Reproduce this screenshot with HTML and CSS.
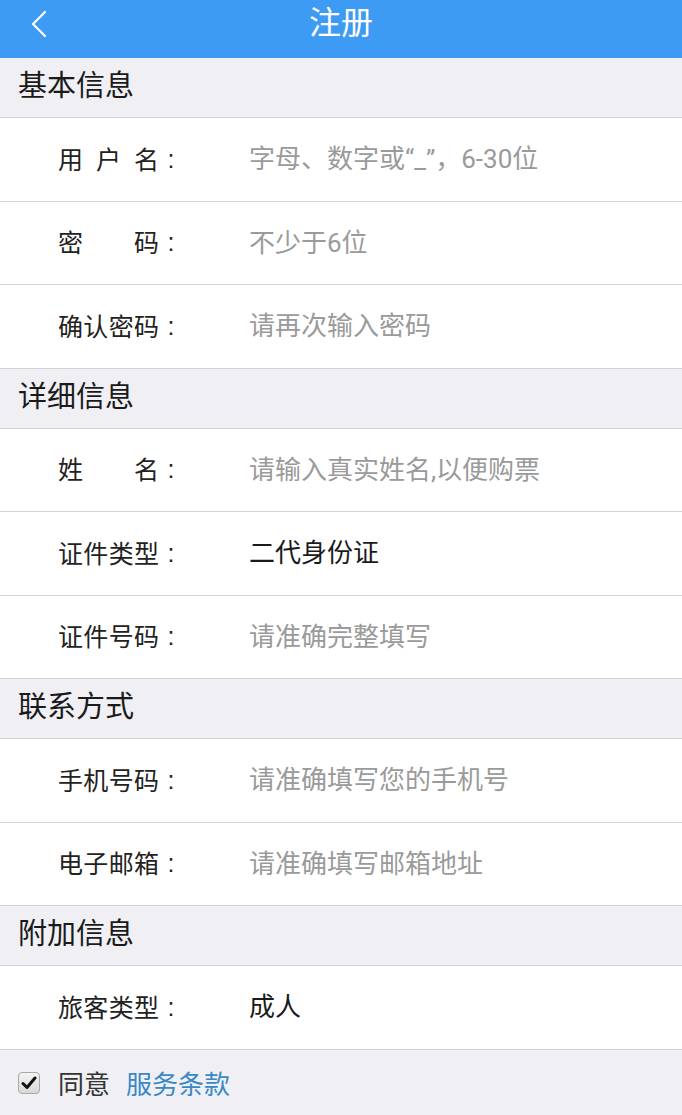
FILE: index.html
```html
<!DOCTYPE html>
<html lang="zh-CN">

<head>
    <meta charset="UTF-8">
    <meta name="viewport" content="width=device-width, initial-scale=1.0">
    <title>注册</title>
    <link rel="stylesheet" href="styles.css">
</head>

<body>
    <header class="top-bar">
        <a class="back" href="#">
            <svg width="18" height="28" viewBox="0 0 18 28">
                <polyline points="15,2 3,14 15,26" fill="none" stroke="#fff" stroke-width="2.2" stroke-linecap="round" stroke-linejoin="round"/>
            </svg>
        </a>
        <h1>注册</h1>
    </header>

    <div class="section-title">基本信息</div>
    <div class="row">
        <span class="label"><span class="label-text">用户名</span><span class="colon">:</span></span>
        <span class="value placeholder">字母、数字或“_”，6-30位</span>
    </div>
    <div class="row">
        <span class="label"><span class="label-text">密码</span><span class="colon">:</span></span>
        <span class="value placeholder">不少于6位</span>
    </div>
    <div class="row">
        <span class="label"><span class="label-text">确认密码</span><span class="colon">:</span></span>
        <span class="value placeholder">请再次输入密码</span>
    </div>

    <div class="section-title">详细信息</div>
    <div class="row">
        <span class="label"><span class="label-text">姓名</span><span class="colon">:</span></span>
        <span class="value placeholder">请输入真实姓名,以便购票</span>
    </div>
    <div class="row">
        <span class="label"><span class="label-text">证件类型</span><span class="colon">:</span></span>
        <span class="value">二代身份证</span>
    </div>
    <div class="row">
        <span class="label"><span class="label-text">证件号码</span><span class="colon">:</span></span>
        <span class="value placeholder">请准确完整填写</span>
    </div>

    <div class="section-title">联系方式</div>
    <div class="row">
        <span class="label"><span class="label-text">手机号码</span><span class="colon">:</span></span>
        <span class="value placeholder">请准确填写您的手机号</span>
    </div>
    <div class="row">
        <span class="label"><span class="label-text">电子邮箱</span><span class="colon">:</span></span>
        <span class="value placeholder">请准确填写邮箱地址</span>
    </div>

    <div class="section-title">附加信息</div>
    <div class="row">
        <span class="label"><span class="label-text">旅客类型</span><span class="colon">:</span></span>
        <span class="value">成人</span>
    </div>

    <div class="agree">
        <span class="checkbox">
            <svg width="16" height="14" viewBox="0 0 16 14">
                <path d="M2 7.5 L6 11.5 L14 2" fill="none" stroke="#111" stroke-width="3" stroke-linecap="round" stroke-linejoin="round"/>
            </svg>
        </span>
        <span class="agree-text">同意</span>
        <a class="terms" href="#">服务条款</a>
    </div>
</body>

</html>
```

FILE: styles.css
```css
body {
    margin: 0;
    font-family: Roboto, "Noto Sans CJK SC", sans-serif;
    background-color: #efeff4;
    color: #222;
}

.top-bar {
    height: 58px;
    background-color: #3e9bf3;
    display: flex;
    align-items: center;
    justify-content: center;
    position: relative;
}

.top-bar h1 {
    margin: 0 0 12px;
    font-size: 32px;
    line-height: 1;
    font-weight: normal;
    color: #fff;
}

.back {
    position: absolute;
    left: 30px;
    top: 10px;
}

.section-title {
    height: 60px;
    box-sizing: border-box;
    display: flex;
    align-items: center;
    padding-left: 18px;
    padding-bottom: 2px;
    font-size: 29px;
    line-height: 1;
    color: #1a1a1a;
    background-color: #efeff4;
    border-bottom: 1px solid #d3d3d7;
}

.row {
    height: 83.5px;
    box-sizing: border-box;
    display: flex;
    align-items: center;
    padding-bottom: 2px;
    background: #fff;
    border-bottom: 1px solid #d3d3d7;
    line-height: 1;
}

.label {
    display: flex;
    align-items: center;
    flex-shrink: 0;
    width: 249px;
    padding-left: 58px;
    box-sizing: border-box;
    font-family: "Noto Sans CJK SC", sans-serif;
    font-size: 25px;
    color: #222;
}

.label-text {
    width: 101px;
    text-align: justify;
    text-align-last: justify;
}

.colon {
    width: 24px;
    text-align: center;
    font-family: "Liberation Sans", sans-serif;
    padding-top: 2px;
}

.value {
    font-size: 26px;
    color: #1a1a1a;
    padding-top: 2px;
}

.value.placeholder {
    color: #9a9a9a;
}

.agree {
    height: 66px;
    display: flex;
    align-items: center;
    padding-left: 18px;
    font-size: 26px;
}

.checkbox {
    width: 20px;
    height: 20px;
    border: 1px solid #a8a8a8;
    border-radius: 4px;
    background: linear-gradient(#f4f4f4, #d8d8d8);
    display: flex;
    align-items: center;
    justify-content: center;
    margin-right: 18px;
}

.agree-text {
    color: #333;
    margin-right: 16px;
}

.terms {
    color: #3a88c6;
    text-decoration: none;
}
```
